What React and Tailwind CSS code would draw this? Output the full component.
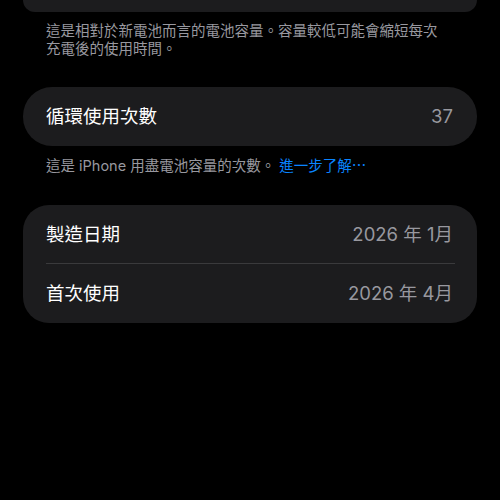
const Row = ({ label, value, divider }) => (
  <div className="relative flex h-[59px] items-center justify-between pl-[23px] pr-[24px]">
    <span className="text-[18.5px] text-white">{label}</span>
    <span className="text-[18.5px] text-[#98989f]">{value}</span>
    {divider && <div className="absolute bottom-0 left-[23px] right-[22px] h-px bg-[#3a3a3c]"></div>}
  </div>
);

const App = () => {
  return (
    <div
      className="h-[500px] w-[500px] overflow-hidden bg-black"
      style={{ fontFamily: '"Inter", "Noto Sans CJK TC", sans-serif' }}
    >
      {/* tail of the battery capacity card */}
      <div className="mx-[23px] h-[12px] rounded-b-[26px] bg-[#1c1c1e]"></div>
      <p className="mt-[10px] pl-[46px] pr-[52px] text-[14.5px] leading-[18px] text-[#98989f]">
        這是相對於新電池而言的電池容量。容量較低可能會縮短每次充電後的使用時間。
      </p>

      <div className="mx-[23px] mt-[29px] rounded-[29px] bg-[#1c1c1e]">
        <Row label="循環使用次數" value="37" />
      </div>
      <p className="mt-[11px] px-[46px] text-[14.5px] leading-[18px] text-[#98989f]">
        這是 iPhone 用盡電池容量的次數。 <span className="text-[#0a84ff]">進一步了解⋯</span>
      </p>

      <div className="mx-[23px] mt-[30px] rounded-[26px] bg-[#1c1c1e]">
        <Row label="製造日期" value="2026 年 1月" divider />
        <Row label="首次使用" value="2026 年 4月" />
      </div>
    </div>
  );
};

export default App;
